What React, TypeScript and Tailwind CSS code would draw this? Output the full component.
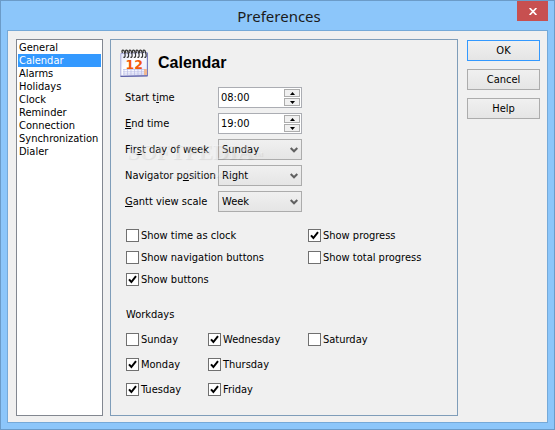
import { useState } from 'react'
import type { ReactNode } from 'react'

const PAGES = [
  'General',
  'Calendar',
  'Alarms',
  'Holidays',
  'Clock',
  'Reminder',
  'Connection',
  'Synchronization',
  'Dialer',
]

export default function App() {
  const [page, setPage] = useState('Calendar')

  return (
    <div className="min-h-screen flex flex-col bg-[#8cc6fa] border border-[#6b9bc8] px-[6px] pb-[6px] font-['DejaVu_Sans_Condensed','DejaVu_Sans',sans-serif] text-[11px] leading-[13px] text-black">
      {/* Title bar */}
      <header className="relative h-[29px] pl-[3px] flex items-center justify-center">
        <h1 className="font-['Noto_Sans',sans-serif] text-[15px] leading-[20px] text-[#1b1b1b]">Preferences</h1>
        <button
          aria-label="Close"
          className="absolute top-0 right-0 w-[31px] h-[20px] flex items-center justify-center bg-[#c75050]"
        >
          <svg width="8" height="7" viewBox="0 0 8 7" stroke="#fff" strokeWidth="1.7">
            <path d="M.6 0 7.4 7M7.4 0 .6 7" />
          </svg>
        </button>
      </header>

      <div className="flex-1 flex bg-[#f0f0f0] border border-[#75a9d8] pl-[8px] pr-[7px] pt-[8px] pb-[6px]">
        <nav className="w-[87px] shrink-0 bg-white border border-[#828790] px-px pt-px">
          <ul>
            {PAGES.map((name) => (
              <li key={name}>
                <button
                  onClick={() => setPage(name)}
                  className={`block w-full h-[13px] pl-px text-left whitespace-nowrap ${
                    name === page ? 'bg-[#3399ff] text-white' : ''
                  }`}
                >
                  {name}
                </button>
              </li>
            ))}
          </ul>
        </nav>

        <main className="relative flex-1 ml-[7px] border border-[#7f9db9] pl-[15px] pr-2 pt-[8px]">
          <div className="flex items-center gap-[10px] -ml-[6px] h-[30px]">
            <CalendarIcon />
            <h2 className="font-['Liberation_Sans',sans-serif] font-bold text-[16px] leading-[20px]">Calendar</h2>
          </div>

          <div className="mt-[9px] flex flex-col gap-[5px]">
            <Row id="start" label={<>Start t<u>i</u>me</>}>
              <TimeBox id="start" value="08:00" />
            </Row>
            <Row id="end" label={<><u>E</u>nd time</>}>
              <TimeBox id="end" value="19:00" />
            </Row>
            <Row id="first" label={<>Fir<u>s</u>t day of week</>}>
              <Dropdown id="first" options={['Sunday', 'Monday']} />
            </Row>
            <Row id="nav" label={<>Navigator p<u>o</u>sition</>}>
              <Dropdown id="nav" options={['Right', 'Left']} />
            </Row>
            <Row id="gantt" label={<><u>G</u>antt view scale</>}>
              <Dropdown id="gantt" options={['Week', 'Month']} />
            </Row>
          </div>

          <div className="mt-[17px] grid grid-cols-[182px_1fr] gap-y-[9px]">
            <Check label="Show time as clock" />
            <Check label="Show progress" checked />
            <Check label="Show navigation buttons" />
            <Check label="Show total progress" />
            <Check label="Show buttons" checked />
          </div>

          <fieldset className="mt-[22px]">
            <legend>Workdays</legend>
            <div className="mt-[12px] grid grid-flow-col grid-rows-3 grid-cols-[82px_100px_1fr] gap-y-[12px]">
              <Check label="Sunday" />
              <Check label="Monday" checked />
              <Check label="Tuesday" checked />
              <Check label="Wednesday" checked />
              <Check label="Thursday" checked />
              <Check label="Friday" checked />
              <Check label="Saturday" />
            </div>
          </fieldset>

          {/* Watermark */}
          <div className="absolute left-[16px] top-[101px] pointer-events-none select-none text-white/30 [text-shadow:1px_1px_1px_rgb(0_0_0/0.08)]">
            <p className="font-['Liberation_Serif',serif] font-bold text-[22px] leading-[22px]">
              SOFTPEDIA<sup className="text-[6px]">TM</sup>
            </p>
            <p className="pl-[22px] pt-[4px] font-['Liberation_Serif',serif] text-[11px]">www.softpedia.com</p>
          </div>
        </main>

        <div className="ml-[9px] w-[73px] flex flex-col gap-[8px] pt-px">
          <PushButton isDefault>OK</PushButton>
          <PushButton>Cancel</PushButton>
          <PushButton>Help</PushButton>
        </div>
      </div>
    </div>
  )
}

// ── Controls ─────────────────────────────────────────────────────────────────

function Row({ id, label, children }: { id: string; label: ReactNode; children: ReactNode }) {
  return (
    <div className="flex items-center h-[21px]">
      <label htmlFor={id} className="-ml-px w-[93px] shrink-0 whitespace-nowrap">
        {label}
      </label>
      {children}
    </div>
  )
}

function TimeBox({ id, value }: { id: string; value: string }) {
  return (
    <div className="flex w-[84px] h-[21px] bg-white border border-[#abadb3]">
      <input id={id} defaultValue={value} className="min-w-0 flex-1 pl-[2px] outline-none" />
      <div className="flex flex-col w-[17px] pr-px py-px gap-px">
        <SpinButton label="Increase" d="M2.5 0 5 3H0Z" />
        <SpinButton label="Decrease" d="M0 0h5L2.5 3Z" />
      </div>
    </div>
  )
}

function SpinButton({ label, d }: { label: string; d: string }) {
  return (
    <button
      aria-label={label}
      className="flex-1 flex items-center justify-center border border-[#acacac] bg-[#f0f0f0]"
    >
      <svg width="5" height="3" viewBox="0 0 5 3">
        <path d={d} />
      </svg>
    </button>
  )
}

function Dropdown({ id, options }: { id: string; options: string[] }) {
  return (
    <div className="grid w-[84px] h-[21px]">
      <select
        id={id}
        className="col-start-1 row-start-1 appearance-none border border-[#acacac] bg-linear-to-b from-[#f0f0f0] to-[#e5e5e5] pl-[3px] outline-none"
      >
        {options.map((o) => (
          <option key={o}>{o}</option>
        ))}
      </select>
      <svg
        width="8"
        height="6"
        viewBox="0 0 8 6"
        fill="none"
        stroke="#606060"
        strokeWidth="2"
        className="col-start-1 row-start-1 self-center justify-self-end mr-[4px] pointer-events-none"
      >
        <path d="M.7 1 4 4.3 7.3 1" />
      </svg>
    </div>
  )
}

function Check({ label, checked = false }: { label: string; checked?: boolean }) {
  return (
    <label className="flex items-center gap-[2px] h-[13px] whitespace-nowrap">
      <span className="grid w-[13px] h-[13px]">
        <input
          type="checkbox"
          defaultChecked={checked}
          className="peer col-start-1 row-start-1 appearance-none w-[13px] h-[13px] bg-white border border-[#707070]"
        />
        <svg
          width="13"
          height="13"
          viewBox="0 0 13 13"
          fill="none"
          stroke="#000"
          strokeWidth="2"
          className="col-start-1 row-start-1 invisible peer-checked:visible pointer-events-none"
        >
          <path d="M3 6.3 5.4 9 10 3.2" />
        </svg>
      </span>
      {label}
    </label>
  )
}

function PushButton({ isDefault = false, children }: { isDefault?: boolean; children: ReactNode }) {
  return (
    <button
      className={`h-[21px] border bg-linear-to-b from-[#f0f0f0] to-[#e5e5e5] ${
        isDefault ? 'border-[#3399ff]' : 'border-[#acacac]'
      }`}
    >
      {children}
    </button>
  )
}

function CalendarIcon() {
  return (
    <svg width="28" height="28" viewBox="0 0 28 28">
      <defs>
        <linearGradient id="sheet" x1="0" y1="0" x2="1" y2="1">
          <stop offset="0" stopColor="#dfe3fa" />
          <stop offset=".4" stopColor="#fff" />
          <stop offset="1" stopColor="#e6e9fb" />
        </linearGradient>
      </defs>
      <path d="M.8 4.5 27.4 3.5V26.6L.8 27.4Z" fill="url(#sheet)" stroke="#a9acdc" />
      <path d="M.5 27.4 27.6 26.8" stroke="#5d61a8" strokeWidth="1.2" />
      <path d="M27.4 4V27" stroke="#7377bb" />
      <path d="M3 20.5H25M3 22.8H25M3 25H25M4 20V26M7.5 20V26M11 20V26M14.5 20V26M18 20V26M21.5 20V26" stroke="#b9bce6" strokeWidth=".7" />
      <path d="M24 20h3v6h-3z" fill="#f0b890" />
      <g fill="none" stroke="#333" strokeWidth="1.3">
        {[3, 6.5, 10, 13.5, 17, 20.5, 24].map((x) => (
          <path key={x} d={`M${x - 0.6} 4C${x - 2} .4 ${x + 0.8} .2 ${x + 1.5} 3C${x + 2.8} 7 ${x + 2} 9.2 ${x + 0.4} 8`} />
        ))}
      </g>
      <text x="14.3" y="19.5" textAnchor="middle" fill="#f4570b" fontFamily="DejaVu Sans" fontWeight="700" fontSize="12.5">
        12
      </text>
    </svg>
  )
}
